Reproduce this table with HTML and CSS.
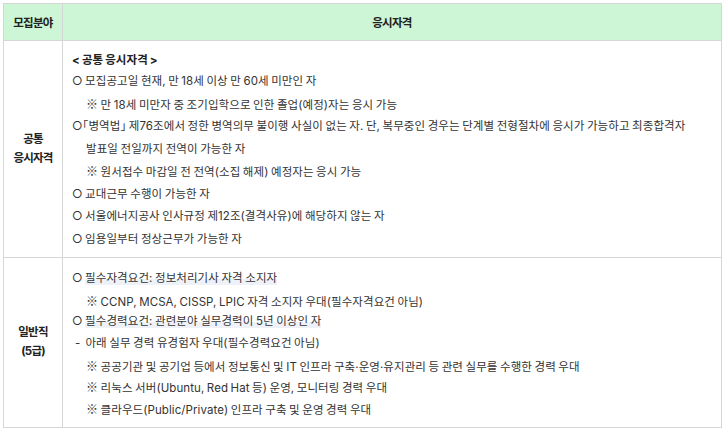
FILE: index.html
```html
<!DOCTYPE html>
<html lang="ko">
<head>
<meta charset="utf-8">
<link rel="stylesheet" href="styles.css">
</head>
<body>
<table class="qual">
  <thead>
    <tr>
      <th class="c1">모집분야</th>
      <th class="c2">응시자격</th>
    </tr>
  </thead>
  <tbody>
    <tr class="r1">
      <td class="field">공통<br>응시자격</td>
      <td class="body">
        <p class="ttl">&lt; 공통 응시자격 &gt;</p>
        <p>○ 모집공고일 현재, 만 18세 이상 만 60세 미만인 자</p>
        <p class="note"><span class="rm">※</span> 만 18세 미만자 중 조기입학으로 인한 졸업(예정)자는 응시 가능</p>
        <p>○<span class="br">「</span>병역법<span class="br">」</span> 제76조에서 정한 병역의무 불이행 사실이 없는 자. 단, 복무중인 경우는 단계별 전형절차에 응시가 가능하고 최종합격자</p>
        <p class="cont">발표일 전일까지 전역이 가능한 자</p>
        <p class="note"><span class="rm">※</span> 원서접수 마감일 전 전역(소집 해제) 예정자는 응시 가능</p>
        <p>○ 교대근무 수행이 가능한 자</p>
        <p>○ 서울에너지공사 인사규정 제12조(결격사유)에 해당하지 않는 자</p>
        <p>○ 임용일부터 정상근무가 가능한 자</p>
      </td>
    </tr>
    <tr class="r2">
      <td class="field">일반직<br>(5급)</td>
      <td class="body">
        <p>○ <span class="hl">필수자격요건: 정보처리기사 자격 소지자</span></p>
        <p class="note"><span class="rm">※</span> CCNP, MCSA, CISSP, LPIC 자격 소지자 우대(필수자격요건 아님)</p>
        <p>○ <span class="hl">필수경력요건: 관련분야 실무경력이 5년 이상인 자</span></p>
        <p class="dash">-&nbsp; 아래 실무 경력 유경험자 우대(필수경력요건 아님)</p>
        <p class="note"><span class="rm">※</span> 공공기관 및 공기업 등에서 정보통신 및 IT 인프라 구축·운영·유지관리 등 관련 실무를 수행한 경력 우대</p>
        <p class="note"><span class="rm">※</span> 리눅스 서버(Ubuntu, Red Hat 등) 운영, 모니터링 경력 우대</p>
        <p class="note"><span class="rm">※</span> 클라우드(Public/Private) 인프라 구축 및 운영 경력 우대</p>
      </td>
    </tr>
  </tbody>
</table>
</body>
</html>
```
FILE: styles.css
```css
html, body {
  margin: 0;
  padding: 0;
  background: #ffffff;
}
body {
  padding: 3px 0 0 3px;
  font-family: "Inter", "Noto Sans CJK KR", sans-serif;
  color: #333333;
}
.qual {
  border-collapse: collapse;
  width: 719px;
  table-layout: fixed;
}
.qual th, .qual td {
  border: 1px solid #d6d6d6;
}
.qual th {
  background: #ccf6d5;
  height: 36px;
  padding: 0;
  font-size: 11.5px;
  font-weight: 700;
  color: #222222;
  letter-spacing: -0.7px;
  text-align: center;
  vertical-align: middle;
}
.qual .c1 { width: 58px; }
.field {
  text-align: center;
  vertical-align: middle;
  font-size: 11.5px;
  font-weight: 700;
  color: #222222;
  line-height: 19px;
  letter-spacing: -0.8px;
  padding: 0;
}
.body {
  vertical-align: top;
  font-size: 11.5px;
  letter-spacing: 0.08px;
  word-spacing: -0.8px;
}
.body p {
  margin: 0;
  white-space: nowrap;
}
.r1 .body {
  padding: 9px 8px 7px 9px;
}
.r1 .body p {
  height: 22.5px;
  line-height: 22.5px;
}
.r1 .body p.ttl {
  height: 20px;
  line-height: 20px;
}
.r2 .body {
  padding: 10px 8px 7px 9px;
}
.r2 .body p {
  height: 21.67px;
  line-height: 21.67px;
}
.ttl {
  font-weight: 700;
  color: #222222;
}
.rm {
  font-family: "Noto Sans CJK KR", sans-serif;
  font-weight: 400;
  font-size: 12px;
}
.br {
  font-feature-settings: "halt";
}
.note { padding-left: 14px; }
.cont { padding-left: 14px; }
.dash { padding-left: 3px; }
.hl {
  background: linear-gradient(transparent 55%, #eef2f8 55%);
}
```
